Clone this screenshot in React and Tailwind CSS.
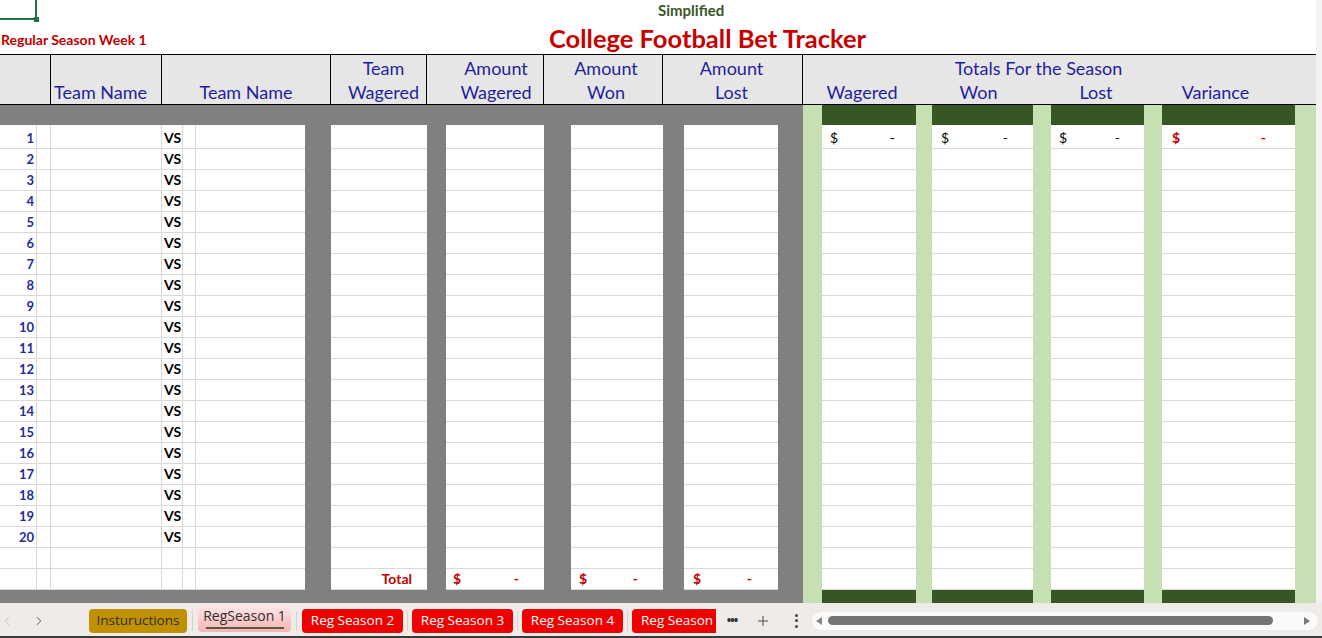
import { ChevronLeft, ChevronRight, Plus } from 'lucide-react';

const cols = [
  { w: 'w-[37px]', t: 'num' },
  { w: 'w-[14px]', t: 'grid' },
  { w: 'w-[111px]', t: 'grid' },
  { w: 'w-[21px]', t: 'vs' },
  { w: 'w-[13px]', t: 'grid' },
  { w: 'w-[109px]', t: 'gridNoR' },
  { w: 'w-[26px]', t: 'gray' },
  { w: 'w-[96px]', t: 'white', k: 'H' },
  { w: 'w-[19px]', t: 'gray' },
  { w: 'w-[98px]', t: 'white', k: 'J' },
  { w: 'w-[27px]', t: 'gray' },
  { w: 'w-[92px]', t: 'white', k: 'L' },
  { w: 'w-[21px]', t: 'gray' },
  { w: 'w-[94px]', t: 'white', k: 'N' },
  { w: 'w-[25px]', t: 'gray' },
  { w: 'w-[19px]', t: 'lg' },
  { w: 'w-[94px]', t: 'dg', k: 'Q' },
  { w: 'w-[16px]', t: 'lg' },
  { w: 'w-[101px]', t: 'dg', k: 'S' },
  { w: 'w-[18px]', t: 'lg' },
  { w: 'w-[93px]', t: 'dg', k: 'U' },
  { w: 'w-[18px]', t: 'lg' },
  { w: 'w-[133px]', t: 'dg', k: 'W' },
  { w: 'w-[21px]', t: 'lg' },
  { w: 'w-[6px]', t: 'edge' },
];

function Money({ pad, red }) {
  return (
    <div className={`flex w-full justify-between text-[14px] ${pad} ${red ? 'font-bold text-[#c00000]' : 'text-black'}`}>
      <span>$</span>
      <span>-</span>
    </div>
  );
}

function cellContent(c, kind, n) {
  if (kind === 'data') {
    if (c.t === 'num') return <span className="w-full pr-[2px] text-right text-[13px] font-bold text-[#1f2d9c]">{n}</span>;
    if (c.t === 'vs') return <span className="pl-[2px] text-[14px] font-bold text-black">VS</span>;
    if (n === 1) {
      if (c.k === 'Q') return <Money pad="pl-[8px] pr-[21px]" />;
      if (c.k === 'S') return <Money pad="pl-[9px] pr-[25px]" />;
      if (c.k === 'U') return <Money pad="pl-[8px] pr-[24px]" />;
      if (c.k === 'W') return <Money pad="pl-[10px] pr-[29px]" red />;
    }
  }
  if (kind === 'total') {
    if (c.k === 'H') return <span className="w-full pr-[15px] text-right text-[14px] font-bold text-[#c00000]">Total</span>;
    if (c.k === 'J') return <Money pad="pl-[7px] pr-[25px]" red />;
    if (c.k === 'L') return <Money pad="pl-[8px] pr-[25px]" red />;
    if (c.k === 'N') return <Money pad="pl-[9px] pr-[26px]" red />;
  }
  return null;
}

function cellClass(c, kind) {
  if (c.t === 'edge') return 'bg-[#f3f3f3]';
  if (c.t === 'lg') return 'bg-[#c6e0b4]';
  if (kind === 'bar') return c.t === 'dg' ? 'bg-[#375623]' : 'bg-[#808080]';
  if (c.t === 'gray') return 'bg-[#808080]';
  if (c.t === 'gridNoR' || c.t === 'white' || c.t === 'dg') return 'bg-white border-b border-[#d9d9d9]';
  return 'bg-white border-b border-r border-[#d9d9d9]';
}

function SheetRow({ h, kind, n }) {
  return (
    <div className={`flex ${h}`}>
      {cols.map((c, i) => (
        <div key={i} className={`flex shrink-0 items-end leading-[20px] ${c.w} ${cellClass(c, kind)}`}>
          {cellContent(c, kind, n)}
        </div>
      ))}
    </div>
  );
}

function Tab({ label, className }) {
  return (
    <div className={`flex h-[24px] shrink-0 items-center justify-center rounded-[4px] text-[13.5px] ${className}`}>
      {label}
    </div>
  );
}

function Sep({ m }) {
  return <div className={`h-[20px] w-px shrink-0 bg-[#d8d3cf] ${m}`} />;
}

export default function App() {
  const rows = Array.from({ length: 20 }, (_, i) => i + 1);

  return (
    <div className="relative h-[638px] w-[1322px] overflow-hidden bg-white font-['Lato',sans-serif]">
      {/* active cell marker */}
      <div className="absolute left-0 top-0 h-[20px] w-[37px] border-b-2 border-r-2 border-[#217346]" />
      <div className="absolute left-[34px] top-[17px] h-[5px] w-[5px] bg-[#217346]" />

      {/* title area */}
      <div className="flex h-[54px] w-[1322px]">
        <div className="flex w-[1316px] flex-col">
          <div className="flex h-[21px] items-center pl-[658px] text-[15px] font-bold text-[#375623]">Simplified</div>
          <div className="flex h-[33px] items-end pb-[1px]">
            <div className="w-[549px] pb-[3px] pl-[1px] text-[14px] font-bold text-[#c00000]">Regular Season Week 1</div>
            <div className="text-[25.5px] font-bold leading-[30px] text-[#c80000]">College Football Bet Tracker</div>
          </div>
        </div>
        <div className="w-[6px] bg-[#f3f3f3]" />
      </div>

      {/* header */}
      <div className="flex h-[51px]">
        <div className="flex w-[1316px] border-b border-t border-black bg-[#e7e6e6] text-[18px] leading-[24px] text-[#1f1f9e]">
          <div className="w-[51px] shrink-0 border-r border-black" />
          <div className="flex w-[111px] shrink-0 items-end border-r border-black pl-[3px]">Team Name</div>
          <div className="flex w-[169px] shrink-0 items-end justify-center border-r border-black">Team Name</div>
          <div className="flex w-[96px] shrink-0 flex-col items-center justify-end border-r border-black pl-[10px]">
            <span>Team</span>
            <span className="whitespace-nowrap">Wagered</span>
          </div>
          <div className="flex w-[117px] shrink-0 flex-col items-center justify-end border-r border-black pl-[22px]">
            <span>Amount</span>
            <span>Wagered</span>
          </div>
          <div className="flex w-[119px] shrink-0 flex-col items-center justify-end border-r border-black pl-[6px]">
            <span>Amount</span>
            <span>Won</span>
          </div>
          <div className="flex w-[140px] shrink-0 flex-col items-center justify-end border-r border-black pr-[2px]">
            <span>Amount</span>
            <span>Lost</span>
          </div>
          <div className="flex w-[513px] shrink-0 flex-col justify-end">
            <div className="pr-[42px] text-center">Totals For the Season</div>
            <div className="flex">
              <div className="w-[19px]" />
              <div className="w-[94px] pr-[14px] text-center">Wagered</div>
              <div className="w-[16px]" />
              <div className="w-[101px] pr-[8px] text-center">Won</div>
              <div className="w-[18px]" />
              <div className="w-[93px] pr-[3px] text-center">Lost</div>
              <div className="w-[18px]" />
              <div className="w-[133px] pr-[26px] text-center">Variance</div>
            </div>
          </div>
        </div>
        <div className="w-[6px] bg-[#f3f3f3]" />
      </div>

      {/* sheet body */}
      <SheetRow h="h-[20px]" kind="bar" />
      {rows.map((n) => (
        <SheetRow key={n} h={n === 1 ? 'h-[24px]' : 'h-[21px]'} kind="data" n={n} />
      ))}
      <SheetRow h="h-[21px]" kind="blank" />
      <SheetRow h="h-[21px]" kind="total" />
      <SheetRow h="h-[13px]" kind="bar" />

      {/* sheet tabs */}
      <div className="flex h-[35px] items-center border-b-2 border-[#3a3a3a] bg-[#efebe8] pt-[2px] font-['Open_Sans',sans-serif]">
        <div className="flex w-[89px] shrink-0 items-center">
          <ChevronLeft size={14} strokeWidth={1.5} className="ml-[0px] text-[#b5b5b5]" />
          <ChevronRight size={14} strokeWidth={1.5} className="ml-[18px] text-[#444]" />
        </div>
        <Tab label="Instuructions" className="w-[98px] bg-[#bf9000] text-[#2f2f2f]" />
        <Sep m="mx-[5px]" />
        <div className="flex h-[27px] w-[93px] shrink-0 -translate-y-[2px] flex-col items-center rounded-[4px] bg-gradient-to-b from-[#fde8e8] to-[#f4b4b4] pt-[1px] text-[14px] text-[#2f2f2f]">
          <span className="leading-[20px]">RegSeason 1</span>
          <div className="mt-[1px] h-[2px] w-[78px] bg-[#5b5746]" />
        </div>
        <Sep m="mx-[5px]" />
        <Tab label="Reg Season 2" className="w-[101px] bg-[#ee0000] text-white" />
        <Sep m="mx-[4px]" />
        <Tab label="Reg Season 3" className="w-[101px] bg-[#ee0000] text-white" />
        <Sep m="mx-[4px]" />
        <Tab label="Reg Season 4" className="w-[101px] bg-[#ee0000] text-white" />
        <Sep m="mx-[4px]" />
        <div className="flex h-[24px] w-[84px] shrink-0 items-center whitespace-nowrap rounded-l-[4px] bg-[#ee0000] pl-[9px] text-[13.5px] text-white">
          Reg Season
        </div>
        <div className="ml-[8px] w-[16px] shrink-0 text-center text-[12px] font-bold tracking-[-1px] text-[#333]">•••</div>
        <Plus size={16} strokeWidth={1.3} className="ml-[15px] text-[#333]" />
        <div className="ml-[23px] flex h-[16px] w-[4px] shrink-0 flex-col items-center justify-between py-[1px]">
          <div className="h-[3px] w-[3px] rounded-full bg-[#444]" />
          <div className="h-[3px] w-[3px] rounded-full bg-[#444]" />
          <div className="h-[3px] w-[3px] rounded-full bg-[#444]" />
        </div>
        <div className="ml-[14px] flex h-[18px] w-[506px] shrink-0 items-center rounded-full bg-[#fbfafa] px-[4px]">
          <svg width="6" height="8" viewBox="0 0 6 8" className="shrink-0">
            <path d="M6 0 L0 4 L6 8 Z" fill="#888" />
          </svg>
          <div className="ml-[6px] h-[9px] w-[445px] rounded-full bg-[#747474]" />
          <div className="flex-1" />
          <svg width="6" height="8" viewBox="0 0 6 8" className="mr-[4px] shrink-0">
            <path d="M0 0 L6 4 L0 8 Z" fill="#777" />
          </svg>
        </div>
      </div>
    </div>
  );
}
